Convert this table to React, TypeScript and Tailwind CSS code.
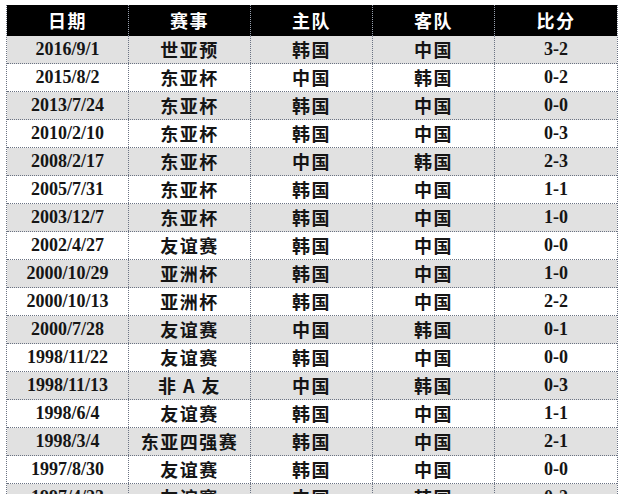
const rows = [
  ['2016/9/1', '世亚预', '韩国', '中国', '3-2'],
  ['2015/8/2', '东亚杯', '中国', '韩国', '0-2'],
  ['2013/7/24', '东亚杯', '韩国', '中国', '0-0'],
  ['2010/2/10', '东亚杯', '韩国', '中国', '0-3'],
  ['2008/2/17', '东亚杯', '中国', '韩国', '2-3'],
  ['2005/7/31', '东亚杯', '韩国', '中国', '1-1'],
  ['2003/12/7', '东亚杯', '韩国', '中国', '1-0'],
  ['2002/4/27', '友谊赛', '韩国', '中国', '0-0'],
  ['2000/10/29', '亚洲杯', '韩国', '中国', '1-0'],
  ['2000/10/13', '亚洲杯', '韩国', '中国', '2-2'],
  ['2000/7/28', '友谊赛', '中国', '韩国', '0-1'],
  ['1998/11/22', '友谊赛', '韩国', '中国', '0-0'],
  ['1998/11/13', '非 A 友', '中国', '韩国', '0-3'],
  ['1998/6/4', '友谊赛', '韩国', '中国', '1-1'],
  ['1998/3/4', '东亚四强赛', '韩国', '中国', '2-1'],
  ['1997/8/30', '友谊赛', '韩国', '中国', '0-0'],
  ['1997/4/23', '友谊赛', '中国', '韩国', '0-2'],
]

const headers = ['日期', '赛事', '主队', '客队', '比分']

const serif = "font-['Liberation_Serif',serif]"
const cjk = "font-['Noto_Sans_CJK_SC',sans-serif] tracking-[1.5px]"

export default function App() {
  return (
    <div className="h-[494px] overflow-hidden bg-white pl-[6px] pt-[5px]">
      <div className="w-[612px] border-x border-dotted border-gray-500">
        <div className="grid h-[31px] grid-cols-5 bg-black">
          {headers.map((h, i) => (
            <div
              key={h}
              className={`flex items-center justify-center text-[18px] font-bold text-white ${cjk} ${
                i < 4 ? 'border-r border-dotted border-gray-400' : ''
              }`}
            >
              {h}
            </div>
          ))}
        </div>
        {rows.map((r, ri) => (
          <div
            key={r[0]}
            className={`grid h-[28px] grid-cols-5 border-b border-dotted border-gray-500 ${
              ri % 2 === 0 ? 'bg-[#e1e1e1]' : 'bg-white'
            }`}
          >
            {r.map((c, ci) => (
              <div
                key={ci}
                className={`flex items-center justify-center text-[18px] font-bold text-[#151515] ${
                  ci === 0 || ci === 4 ? serif : cjk
                } ${ci < 4 ? 'border-r border-dotted border-gray-500' : ''}`}
              >
                {c}
              </div>
            ))}
          </div>
        ))}
      </div>
    </div>
  )
}
